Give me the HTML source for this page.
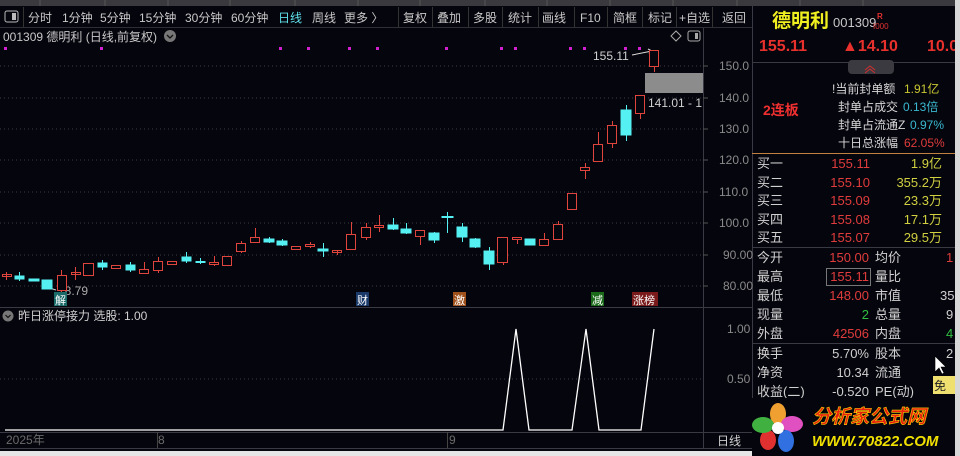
<!DOCTYPE html>
<html><head><meta charset="utf-8"><style>
*{margin:0;padding:0}
body{width:960px;height:456px;overflow:hidden;background:#05050d;font-family:"Liberation Sans","Noto Sans CJK SC",sans-serif;position:relative}
svg{position:absolute;left:0;top:0}
</style></head><body>
<svg width="960" height="456" xmlns="http://www.w3.org/2000/svg" font-family="Liberation Sans, Noto Sans CJK SC, sans-serif">
<rect x="0" y="0" width="960" height="456" fill="#05050d"/>
<!-- top gray bar -->
<rect x="0" y="0" width="960" height="6" fill="#3a3a3e"/>
<g stroke="#555" stroke-width="1">
<line x1="40" y1="0" x2="40" y2="6"/><line x1="105" y1="0" x2="105" y2="6"/><line x1="168" y1="0" x2="168" y2="6"/><line x1="230" y1="0" x2="230" y2="6"/><line x1="295" y1="0" x2="295" y2="6"/><line x1="358" y1="0" x2="358" y2="6"/><line x1="420" y1="0" x2="420" y2="6"/><line x1="485" y1="0" x2="485" y2="6"/><line x1="547" y1="0" x2="547" y2="6"/><line x1="610" y1="0" x2="610" y2="6"/><line x1="673" y1="0" x2="673" y2="6"/><line x1="737" y1="0" x2="737" y2="6"/><line x1="800" y1="0" x2="800" y2="6"/><line x1="863" y1="0" x2="863" y2="6"/>
</g>
<!-- toolbar -->
<line x1="0" y1="27.5" x2="752" y2="27.5" stroke="#2e2e36"/>
<rect x="5" y="11" width="13" height="11" rx="2" fill="none" stroke="#bbb"/><rect x="12" y="13" width="4" height="7" fill="#bbb"/>
<line x1="23.5" y1="7" x2="23.5" y2="27" stroke="#333"/>
<g font-size="12" fill="#c8c8c8">
<text x="28" y="22">分时</text><text x="62" y="22">1分钟</text><text x="100" y="22">5分钟</text><text x="139" y="22">15分钟</text><text x="185" y="22">30分钟</text><text x="231" y="22">60分钟</text>
<text x="278" y="22" fill="#5fe0e8">日线</text><text x="312" y="22">周线</text><text x="344" y="22">更多 〉</text>
<text x="403" y="22">复权</text><text x="437" y="22">叠加</text><text x="473" y="22">多股</text><text x="508" y="22">统计</text><text x="542" y="22">画线</text><text x="580" y="22">F10</text><text x="613" y="22">简框</text><text x="648" y="22">标记</text><text x="679" y="22">+自选</text><text x="722" y="22">返回</text>
</g>
<g stroke="#333"><line x1="398.5" y1="7" x2="398.5" y2="27"/><line x1="432.5" y1="7" x2="432.5" y2="27"/><line x1="468.5" y1="7" x2="468.5" y2="27"/><line x1="502.5" y1="7" x2="502.5" y2="27"/><line x1="538.5" y1="7" x2="538.5" y2="27"/><line x1="574.5" y1="7" x2="574.5" y2="27"/><line x1="607.5" y1="7" x2="607.5" y2="27"/><line x1="642.5" y1="7" x2="642.5" y2="27"/><line x1="676.5" y1="7" x2="676.5" y2="27"/><line x1="712.5" y1="7" x2="712.5" y2="27"/></g>
<!-- chart title -->
<text x="3" y="41" font-size="12" fill="#c8c8c8">001309 德明利 (日线,前复权)</text>
<circle cx="170" cy="36" r="6" fill="#777"/><path d="M167 35 l3 3 l3 -3" stroke="#111" fill="none" stroke-width="1.3"/>
<path d="M676 31 l5 5 l-5 5 l-5 -5z" fill="none" stroke="#aaa"/>
<rect x="688" y="31" width="12" height="10" rx="2" fill="none" stroke="#aaa"/><rect x="695" y="33" width="3" height="6" fill="#aaa"/>
<!-- pink dots -->
<g fill="#d020d0"><rect x="4" y="47" width="3" height="3"/><rect x="100" y="47" width="3" height="3"/><rect x="279" y="47" width="3" height="3"/><rect x="307" y="47" width="3" height="3"/><rect x="348" y="47" width="3" height="3"/><rect x="376" y="47" width="3" height="3"/><rect x="445" y="47" width="3" height="3"/><rect x="500" y="47" width="3" height="3"/><rect x="514" y="47" width="3" height="3"/><rect x="569" y="47" width="3" height="3"/><rect x="583" y="47" width="3" height="3"/><rect x="624" y="47" width="3" height="3"/><rect x="638" y="47" width="3" height="3"/></g>
<!-- grid -->
<g stroke="#3a3a44" stroke-dasharray="1,3"><line x1="0" y1="66" x2="703" y2="66"/><line x1="0" y1="98" x2="703" y2="98"/><line x1="0" y1="129" x2="703" y2="129"/><line x1="0" y1="160" x2="703" y2="160"/><line x1="0" y1="192" x2="703" y2="192"/><line x1="0" y1="223" x2="703" y2="223"/><line x1="0" y1="255" x2="703" y2="255"/><line x1="0" y1="286" x2="703" y2="286"/>
<line x1="0" y1="379" x2="703" y2="379"/></g>
<!-- y axis -->
<line x1="703.5" y1="28" x2="703.5" y2="448" stroke="#3a3a44"/>
<line x1="752.5" y1="6" x2="752.5" y2="456" stroke="#3a3a44"/>
<g font-size="12" fill="#8a8a8a"><text x="719" y="70">150.0</text><text x="719" y="102">140.0</text><text x="719" y="133">130.0</text><text x="719" y="164">120.0</text><text x="719" y="196">110.0</text><text x="719" y="227">100.0</text><text x="723" y="259">90.00</text><text x="723" y="290">80.00</text>
<text x="727" y="333">1.00</text><text x="727" y="383">0.50</text></g>
<g stroke="#555"><line x1="703" y1="66" x2="708" y2="66"/><line x1="703" y1="98" x2="708" y2="98"/><line x1="703" y1="129" x2="708" y2="129"/><line x1="703" y1="160" x2="708" y2="160"/><line x1="703" y1="192" x2="708" y2="192"/><line x1="703" y1="223" x2="708" y2="223"/><line x1="703" y1="255" x2="708" y2="255"/><line x1="703" y1="286" x2="708" y2="286"/></g>
<!-- gray rect -->
<rect x="645" y="73" width="58" height="20" fill="#8c8c8c"/>
<text x="648" y="107" font-size="12" fill="#d0d0d0">141.01 - 1</text>
<text x="593" y="60" font-size="12" fill="#d0d0d0">155.11</text>
<path d="M632 55 l20 -4 M648 49 l4 2 l-3 3" stroke="#ddd" fill="none"/>
<text x="58" y="295" font-size="12" fill="#aaa">78.79</text>
<path d="M56 290 l-10 -3 M49 285 l-3 2 l3 2" stroke="#ccc" fill="none"/>
<!-- candles -->
<g stroke="#e0453d" fill="none" stroke-width="1">
<line x1="6.5" y1="272" x2="6.5" y2="280"/><rect x="2.5" y="274.5" width="9" height="2"/>
<line x1="61.5" y1="270" x2="61.5" y2="292"/><rect x="57.5" y="275.5" width="9" height="15" fill="#05050d"/>
<line x1="75.5" y1="267" x2="75.5" y2="280"/><rect x="71.5" y="272.5" width="9" height="2"/>
<rect x="83.5" y="263.5" width="10" height="12"/>
<rect x="111.5" y="265.5" width="9" height="3"/>
<line x1="144.5" y1="262" x2="144.5" y2="273"/><rect x="139.5" y="269.5" width="9" height="4" fill="#05050d"/>
<line x1="158.5" y1="257" x2="158.5" y2="273"/><rect x="153.5" y="261.5" width="9" height="9" fill="#05050d"/>
<rect x="167.5" y="261.5" width="9" height="3"/>
<line x1="214.5" y1="256" x2="214.5" y2="266"/><rect x="209.5" y="262.5" width="9" height="2" fill="#05050d"/>
<rect x="222.5" y="256.5" width="9" height="9"/>
<line x1="241.5" y1="241" x2="241.5" y2="253"/><rect x="236.5" y="243.5" width="9" height="8" fill="#05050d"/>
<line x1="255.5" y1="228" x2="255.5" y2="242"/><rect x="250.5" y="237.5" width="9" height="5" fill="#05050d"/>
<rect x="291.5" y="246.5" width="9" height="3"/>
<line x1="310.5" y1="242" x2="310.5" y2="248"/><rect x="305.5" y="244.5" width="9" height="2" fill="#05050d"/>
<line x1="337.5" y1="250" x2="337.5" y2="255"/><rect x="332.5" y="250.5" width="9" height="2"/>
<line x1="351.5" y1="222" x2="351.5" y2="249"/><rect x="346.5" y="234.5" width="9" height="15" fill="#05050d"/>
<line x1="366.5" y1="223" x2="366.5" y2="240"/><rect x="361.5" y="227.5" width="9" height="10" fill="#05050d"/>
<line x1="379.5" y1="215" x2="379.5" y2="232"/><rect x="374.5" y="225.5" width="9" height="2" fill="#05050d"/>
<line x1="420.5" y1="230" x2="420.5" y2="245"/><rect x="415.5" y="230.5" width="9" height="6" fill="#05050d"/>
<line x1="503.5" y1="237" x2="503.5" y2="265"/><rect x="497.5" y="237.5" width="10" height="25" fill="#05050d"/>
<line x1="517.5" y1="237" x2="517.5" y2="244"/><rect x="512.5" y="237.5" width="9" height="2" fill="#05050d"/>
<line x1="544.5" y1="233" x2="544.5" y2="246"/><rect x="539.5" y="239.5" width="9" height="6" fill="#05050d"/>
<line x1="558.5" y1="221" x2="558.5" y2="240"/><rect x="553.5" y="224.5" width="9" height="15" fill="#05050d"/>
<rect x="567.5" y="193.5" width="9" height="16"/>
<line x1="585.5" y1="163" x2="585.5" y2="179"/><rect x="580.5" y="167.5" width="9" height="3" fill="#05050d"/>
<line x1="598.5" y1="132" x2="598.5" y2="161"/><rect x="593.5" y="144.5" width="9" height="17" fill="#05050d"/>
<line x1="612.5" y1="121" x2="612.5" y2="148"/><rect x="607.5" y="125.5" width="9" height="18" fill="#05050d"/>
<line x1="640.5" y1="95" x2="640.5" y2="119"/><rect x="635.5" y="95.5" width="9" height="18" fill="#05050d"/>
<line x1="654.5" y1="50" x2="654.5" y2="72"/><rect x="649.5" y="50.5" width="9" height="16" fill="#05050d"/>
</g>
<g fill="#55f0f2" stroke="#55f0f2">
<line x1="19.5" y1="272" x2="19.5" y2="281"/><rect x="15" y="276" width="9" height="3"/>
<rect x="29" y="279" width="10" height="2"/>
<rect x="42" y="280" width="10" height="9"/>
<line x1="102.5" y1="260" x2="102.5" y2="270"/><rect x="98" y="263" width="9" height="4"/>
<line x1="130.5" y1="262" x2="130.5" y2="272"/><rect x="126" y="265" width="9" height="5"/>
<line x1="186.5" y1="252" x2="186.5" y2="263"/><rect x="182" y="257" width="9" height="4"/>
<line x1="200.5" y1="258" x2="200.5" y2="264"/><rect x="196" y="261.5" width="9" height="1"/>
<line x1="269.5" y1="237" x2="269.5" y2="243"/><rect x="264" y="239" width="10" height="3"/>
<line x1="282.5" y1="239" x2="282.5" y2="246"/><rect x="277" y="241" width="10" height="4"/>
<line x1="323.5" y1="243" x2="323.5" y2="257"/><rect x="318" y="249" width="10" height="2"/>
<line x1="393.5" y1="218" x2="393.5" y2="230"/><rect x="388" y="225" width="10" height="4"/>
<line x1="406.5" y1="223" x2="406.5" y2="234"/><rect x="401" y="229" width="10" height="4"/>
<line x1="434.5" y1="232" x2="434.5" y2="243"/><rect x="429" y="233" width="10" height="7"/>
<line x1="447.5" y1="212" x2="447.5" y2="233"/><rect x="442" y="216.5" width="11" height="1"/>
<line x1="462.5" y1="223" x2="462.5" y2="242"/><rect x="457" y="227" width="10" height="10"/>
<line x1="475.5" y1="238" x2="475.5" y2="248"/><rect x="470" y="239" width="10" height="8"/>
<line x1="489.5" y1="247" x2="489.5" y2="270"/><rect x="484" y="251" width="10" height="13"/>
<rect x="525" y="239" width="10" height="6"/>
<line x1="626.5" y1="105" x2="626.5" y2="141"/><rect x="621" y="110" width="10" height="25"/>
</g>
<!-- event tags -->
<g font-size="11"><rect x="54" y="292" width="13" height="14" fill="#1a6a6a"/><text x="55" y="304" fill="#fff">解</text>
<rect x="356" y="292" width="13" height="14" fill="#1a3a6a"/><text x="357" y="304" fill="#fff">财</text>
<rect x="453" y="292" width="13" height="14" fill="#a0501a"/><text x="454" y="304" fill="#fff">激</text>
<rect x="591" y="292" width="13" height="14" fill="#1a6a1a"/><text x="592" y="304" fill="#fff">减</text>
<rect x="632" y="292" width="26" height="14" fill="#7a1a1a"/><text x="633" y="304" fill="#fff">涨榜</text></g>
<!-- lower panel -->
<line x1="0" y1="307.5" x2="752" y2="307.5" stroke="#3a3a44"/>
<circle cx="8" cy="316" r="5.5" fill="#777"/><path d="M5.5 315 l2.5 2.5 l2.5 -2.5" stroke="#111" fill="none" stroke-width="1.2"/>
<text x="18" y="320" font-size="12" fill="#d0d0d0">昨日涨停接力  选股: 1.00</text>
<polyline points="5,430 503,430 516,329 529,430 572,430 586,329 599,430 641,430 654,329" fill="none" stroke="#fff" stroke-width="1.3"/>
<line x1="0" y1="432.5" x2="752" y2="432.5" stroke="#3a3a44"/>
<line x1="0" y1="448.5" x2="752" y2="448.5" stroke="#3a3a44"/>
<g stroke="#444"><line x1="157.5" y1="432" x2="157.5" y2="448"/><line x1="447.5" y1="432" x2="447.5" y2="448"/></g>
<g font-size="12" fill="#6a6a6a"><text x="6" y="444">2025年</text><text x="158" y="444">8</text><text x="449" y="444">9</text></g>
<text x="717" y="445" font-size="12" fill="#cfcfcf">日线</text>
<rect x="0" y="451" width="752" height="5" fill="#e6e6e6"/>
<!-- right panel -->
<text x="772" y="27" font-size="19" font-weight="bold" fill="#f0f020">德明利</text>
<text x="833" y="27" font-size="13" fill="#c8c8c8">001309</text>
<text x="877" y="19" font-size="8" fill="#e03030" font-weight="bold">R</text>
<text x="873" y="29" font-size="8" fill="#e03030">I000</text>
<g font-size="16" font-weight="bold" fill="#e8302c"><text x="759" y="51">155.11</text><text x="842" y="51">▲14.10</text><text x="927" y="51">10.0</text></g>
<line x1="752" y1="62.5" x2="955" y2="62.5" stroke="#3a3a44"/>
<rect x="848" y="60" width="46" height="14" rx="4" fill="#3a3a40"/>
<path d="M865 70 l5 -4 l5 4 M865 73 l5 -4 l5 4" stroke="#d03030" fill="none"/>
<text x="763" y="115" font-size="14" font-weight="bold" fill="#f03030">2连板</text>
<g font-size="12" fill="#d8d8d8"><text x="832" y="93">!当前封单额</text><text x="838" y="111">封单占成交</text><text x="838" y="129">封单占流通Z</text><text x="838" y="147">十日总涨幅</text></g>
<text x="904" y="93" font-size="12" fill="#c8c832">1.91亿</text>
<text x="903" y="111" font-size="12" fill="#3ab8d0">0.13倍</text>
<text x="910" y="129" font-size="12" fill="#3ab8d0">0.97%</text>
<text x="904" y="147" font-size="12" fill="#e03c3c">62.05%</text>
<line x1="752" y1="153.5" x2="955" y2="153.5" stroke="#c08040"/>
<g font-size="13" fill="#d0d0d0"><text x="757" y="168">买一</text><text x="757" y="187">买二</text><text x="757" y="205">买三</text><text x="757" y="224">买四</text><text x="757" y="242">买五</text></g>
<g font-size="13" fill="#e03c3c" text-anchor="end"><text x="870" y="168">155.11</text><text x="870" y="187">155.10</text><text x="870" y="205">155.09</text><text x="870" y="224">155.08</text><text x="870" y="242">155.07</text></g>
<g font-size="13" fill="#d0d040" text-anchor="end"><text x="942" y="168">1.9亿</text><text x="942" y="187">355.2万</text><text x="942" y="205">23.3万</text><text x="942" y="224">17.1万</text><text x="942" y="242">29.5万</text></g>
<line x1="752" y1="247.5" x2="955" y2="247.5" stroke="#3a3a44"/>
<g font-size="13" fill="#d0d0d0"><text x="757" y="262">今开</text><text x="757" y="281">最高</text><text x="757" y="300">最低</text><text x="757" y="319">现量</text><text x="757" y="338">外盘</text>
<text x="875" y="262">均价</text><text x="875" y="281">量比</text><text x="875" y="300">市值</text><text x="875" y="319">总量</text><text x="875" y="338">内盘</text>
<text x="757" y="358">换手</text><text x="757" y="377">净资</text><text x="757" y="396">收益(二)</text><text x="875" y="358">股本</text><text x="875" y="377">流通</text><text x="875" y="396">PE(动)</text></g>
<rect x="826.5" y="268.5" width="44" height="17" fill="none" stroke="#777"/>
<g font-size="13" text-anchor="end"><text x="869" y="262" fill="#e03c3c">150.00</text><text x="869" y="281" fill="#e03c3c">155.11</text><text x="869" y="300" fill="#e03c3c">148.00</text><text x="869" y="319" fill="#30c040">2</text><text x="869" y="338" fill="#e03c3c">42506</text>
<text x="869" y="358" fill="#d0d0d0">5.70%</text><text x="869" y="377" fill="#d0d0d0">10.34</text><text x="869" y="396" fill="#d0d0d0">-0.520</text></g>
<g font-size="13"><text x="946" y="262" fill="#e03c3c">1</text><text x="940" y="300" fill="#d0d0d0">35</text><text x="946" y="319" fill="#d0d0d0">9</text><text x="946" y="338" fill="#30c040">4</text><text x="946" y="358" fill="#d0d0d0">2</text></g>
<line x1="752" y1="343.5" x2="955" y2="343.5" stroke="#3a3a44"/>
<path d="M935 356 l0 16 l4 -4 l3 6 l2 -1 l-3 -6 l5 0z" fill="#fff" stroke="#000" stroke-width="0.6"/>
<rect x="933" y="376" width="22" height="18" fill="#f0e070"/><text x="934" y="390" font-size="12" fill="#222">免</text>
<!-- logo -->
<rect x="752" y="398" width="200" height="58" fill="#05050d"/>
<g transform="translate(778,428)">
<ellipse cx="0" cy="-14" rx="8" ry="11" fill="#f0a030"/><ellipse cx="14" cy="-4" rx="11" ry="8" fill="#e050c0"/><ellipse cx="8" cy="13" rx="8" ry="11" fill="#3070e0"/><ellipse cx="-10" cy="12" rx="8" ry="10" fill="#e03030"/><ellipse cx="-15" cy="-3" rx="11" ry="8" fill="#40b040"/><circle cx="0" cy="0" r="6" fill="#fff"/></g>
<text x="812" y="423" font-size="19" font-weight="bold" font-style="italic" fill="#e82010" stroke="#ffd000" stroke-width="0.6">分析家公式网</text>
<text x="812" y="446" font-size="15" font-weight="bold" font-style="italic" fill="#f0e000">WWW.70822.COM</text>
<rect x="955" y="0" width="5" height="456" fill="#d8d8d8"/>
</svg>
</body></html>
